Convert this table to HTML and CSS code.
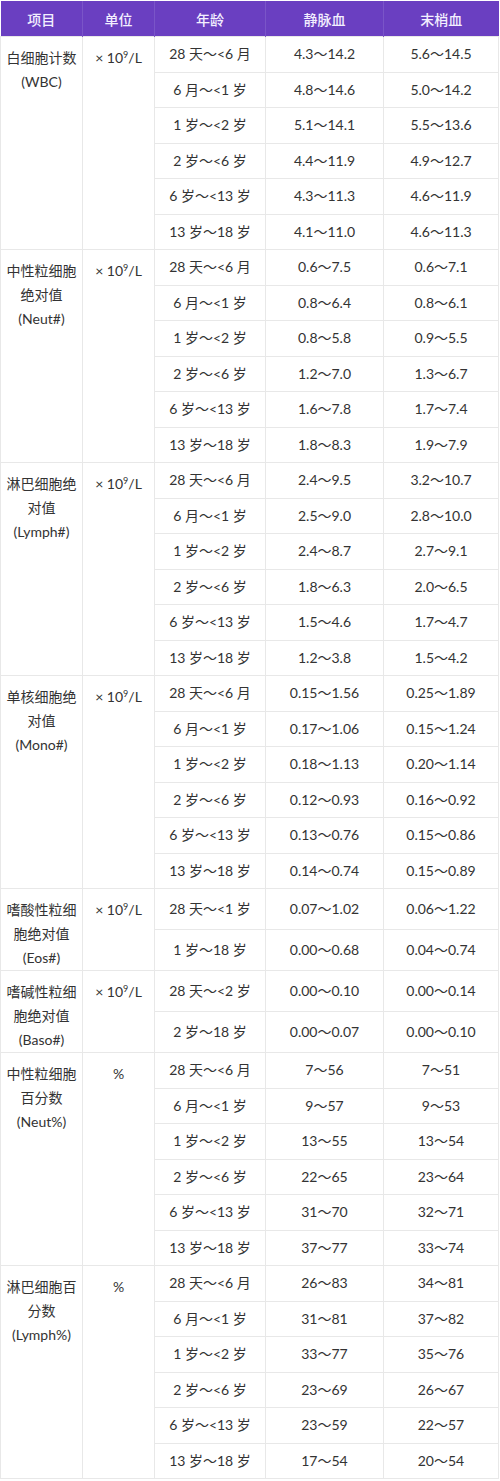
FILE: index.html
```html
<!DOCTYPE html>
<html lang="zh">
<head>
<meta charset="utf-8">
<link rel="stylesheet" href="styles.css">
</head>
<body>
<table class="ref">
  <colgroup>
    <col class="c1"><col class="c2"><col class="c3"><col class="c4"><col class="c5">
  </colgroup>
  <thead>
    <tr><th>项目</th><th>单位</th><th>年龄</th><th>静脉血</th><th>末梢血</th></tr>
  </thead>
  <tbody>
    <tr class="r"><td class="item" rowspan="6">白细胞计数<br>(WBC)</td><td class="unit" rowspan="6">× 10<sup>9</sup>/L</td><td>28 天～&lt;6 月</td><td>4.3～14.2</td><td>5.6～14.5</td></tr>
    <tr class="r"><td>6 月～&lt;1 岁</td><td>4.8～14.6</td><td>5.0～14.2</td></tr>
    <tr class="r"><td>1 岁～&lt;2 岁</td><td>5.1～14.1</td><td>5.5～13.6</td></tr>
    <tr class="r"><td>2 岁～&lt;6 岁</td><td>4.4～11.9</td><td>4.9～12.7</td></tr>
    <tr class="r"><td>6 岁～&lt;13 岁</td><td>4.3～11.3</td><td>4.6～11.9</td></tr>
    <tr class="r"><td>13 岁～18 岁</td><td>4.1～11.0</td><td>4.6～11.3</td></tr>

    <tr class="r"><td class="item" rowspan="6">中性粒细胞<br>绝对值<br>(Neut#)</td><td class="unit" rowspan="6">× 10<sup>9</sup>/L</td><td>28 天～&lt;6 月</td><td>0.6～7.5</td><td>0.6～7.1</td></tr>
    <tr class="r"><td>6 月～&lt;1 岁</td><td>0.8～6.4</td><td>0.8～6.1</td></tr>
    <tr class="r"><td>1 岁～&lt;2 岁</td><td>0.8～5.8</td><td>0.9～5.5</td></tr>
    <tr class="r"><td>2 岁～&lt;6 岁</td><td>1.2～7.0</td><td>1.3～6.7</td></tr>
    <tr class="r"><td>6 岁～&lt;13 岁</td><td>1.6～7.8</td><td>1.7～7.4</td></tr>
    <tr class="r"><td>13 岁～18 岁</td><td>1.8～8.3</td><td>1.9～7.9</td></tr>

    <tr class="r"><td class="item" rowspan="6">淋巴细胞绝<br>对值<br>(Lymph#)</td><td class="unit" rowspan="6">× 10<sup>9</sup>/L</td><td>28 天～&lt;6 月</td><td>2.4～9.5</td><td>3.2～10.7</td></tr>
    <tr class="r"><td>6 月～&lt;1 岁</td><td>2.5～9.0</td><td>2.8～10.0</td></tr>
    <tr class="r"><td>1 岁～&lt;2 岁</td><td>2.4～8.7</td><td>2.7～9.1</td></tr>
    <tr class="r"><td>2 岁～&lt;6 岁</td><td>1.8～6.3</td><td>2.0～6.5</td></tr>
    <tr class="r"><td>6 岁～&lt;13 岁</td><td>1.5～4.6</td><td>1.7～4.7</td></tr>
    <tr class="r"><td>13 岁～18 岁</td><td>1.2～3.8</td><td>1.5～4.2</td></tr>

    <tr class="r"><td class="item" rowspan="6">单核细胞绝<br>对值<br>(Mono#)</td><td class="unit" rowspan="6">× 10<sup>9</sup>/L</td><td>28 天～&lt;6 月</td><td>0.15～1.56</td><td>0.25～1.89</td></tr>
    <tr class="r"><td>6 月～&lt;1 岁</td><td>0.17～1.06</td><td>0.15～1.24</td></tr>
    <tr class="r"><td>1 岁～&lt;2 岁</td><td>0.18～1.13</td><td>0.20～1.14</td></tr>
    <tr class="r"><td>2 岁～&lt;6 岁</td><td>0.12～0.93</td><td>0.16～0.92</td></tr>
    <tr class="r"><td>6 岁～&lt;13 岁</td><td>0.13～0.76</td><td>0.15～0.86</td></tr>
    <tr class="r"><td>13 岁～18 岁</td><td>0.14～0.74</td><td>0.15～0.89</td></tr>

    <tr class="r2"><td class="item" rowspan="2">嗜酸性粒细<br>胞绝对值<br>(Eos#)</td><td class="unit" rowspan="2">× 10<sup>9</sup>/L</td><td>28 天～&lt;1 岁</td><td>0.07～1.02</td><td>0.06～1.22</td></tr>
    <tr class="r2"><td>1 岁～18 岁</td><td>0.00～0.68</td><td>0.04～0.74</td></tr>

    <tr class="r2"><td class="item" rowspan="2">嗜碱性粒细<br>胞绝对值<br>(Baso#)</td><td class="unit" rowspan="2">× 10<sup>9</sup>/L</td><td>28 天～&lt;2 岁</td><td>0.00～0.10</td><td>0.00～0.14</td></tr>
    <tr class="r2"><td>2 岁～18 岁</td><td>0.00～0.07</td><td>0.00～0.10</td></tr>

    <tr class="r"><td class="item" rowspan="6">中性粒细胞<br>百分数<br>(Neut%)</td><td class="unit" rowspan="6">%</td><td>28 天～&lt;6 月</td><td>7～56</td><td>7～51</td></tr>
    <tr class="r"><td>6 月～&lt;1 岁</td><td>9～57</td><td>9～53</td></tr>
    <tr class="r"><td>1 岁～&lt;2 岁</td><td>13～55</td><td>13～54</td></tr>
    <tr class="r"><td>2 岁～&lt;6 岁</td><td>22～65</td><td>23～64</td></tr>
    <tr class="r"><td>6 岁～&lt;13 岁</td><td>31～70</td><td>32～71</td></tr>
    <tr class="r"><td>13 岁～18 岁</td><td>37～77</td><td>33～74</td></tr>

    <tr class="r"><td class="item" rowspan="6">淋巴细胞百<br>分数<br>(Lymph%)</td><td class="unit" rowspan="6">%</td><td>28 天～&lt;6 月</td><td>26～83</td><td>34～81</td></tr>
    <tr class="r"><td>6 月～&lt;1 岁</td><td>31～81</td><td>37～82</td></tr>
    <tr class="r"><td>1 岁～&lt;2 岁</td><td>33～77</td><td>35～76</td></tr>
    <tr class="r"><td>2 岁～&lt;6 岁</td><td>23～69</td><td>26～67</td></tr>
    <tr class="r"><td>6 岁～&lt;13 岁</td><td>23～59</td><td>22～57</td></tr>
    <tr class="r"><td>13 岁～18 岁</td><td>17～54</td><td>20～54</td></tr>
  </tbody>
</table>
</body>
</html>
```

FILE: styles.css
```css
html, body {
  margin: 0;
  padding: 0;
  background: #ffffff;
}

body {
  padding-top: 1px;
  font-family: "Lato", "Noto Sans CJK SC", sans-serif;
  font-size: 14px;
  color: #333333;
}

.ref {
  width: 498px;
  table-layout: fixed;
  border-collapse: collapse;
}

.c1 { width: 82px; }
.c2 { width: 72px; }
.c3 { width: 111px; }
.c4 { width: 118px; }
.c5 { width: 115px; }

.ref th {
  height: 35px;
  padding: 0;
  background: #6a3fc1;
  color: #f3efff;
  font-weight: 500;
  text-align: center;
  vertical-align: middle;
  border-left: 1px solid #7a55c8;
  border-right: 1px solid #7a55c8;
}

.ref th:first-child { border-left: none; }
.ref th:last-child { border-right: none; }

.ref td {
  padding: 0 2px;
  border: 1px solid #e8e8e8;
  text-align: center;
  vertical-align: middle;
  line-height: 20px;
  white-space: nowrap;
}

.ref tr.r { height: 35.5px; }
.ref tr.r2 { height: 41px; }

.ref td.item,
.ref td.unit {
  vertical-align: top;
  padding: 9px 2px 0;
  line-height: 24px;
}

.ref td.unit sup {
  font-size: 9px;
  line-height: 0;
  vertical-align: 5px;
}
```
